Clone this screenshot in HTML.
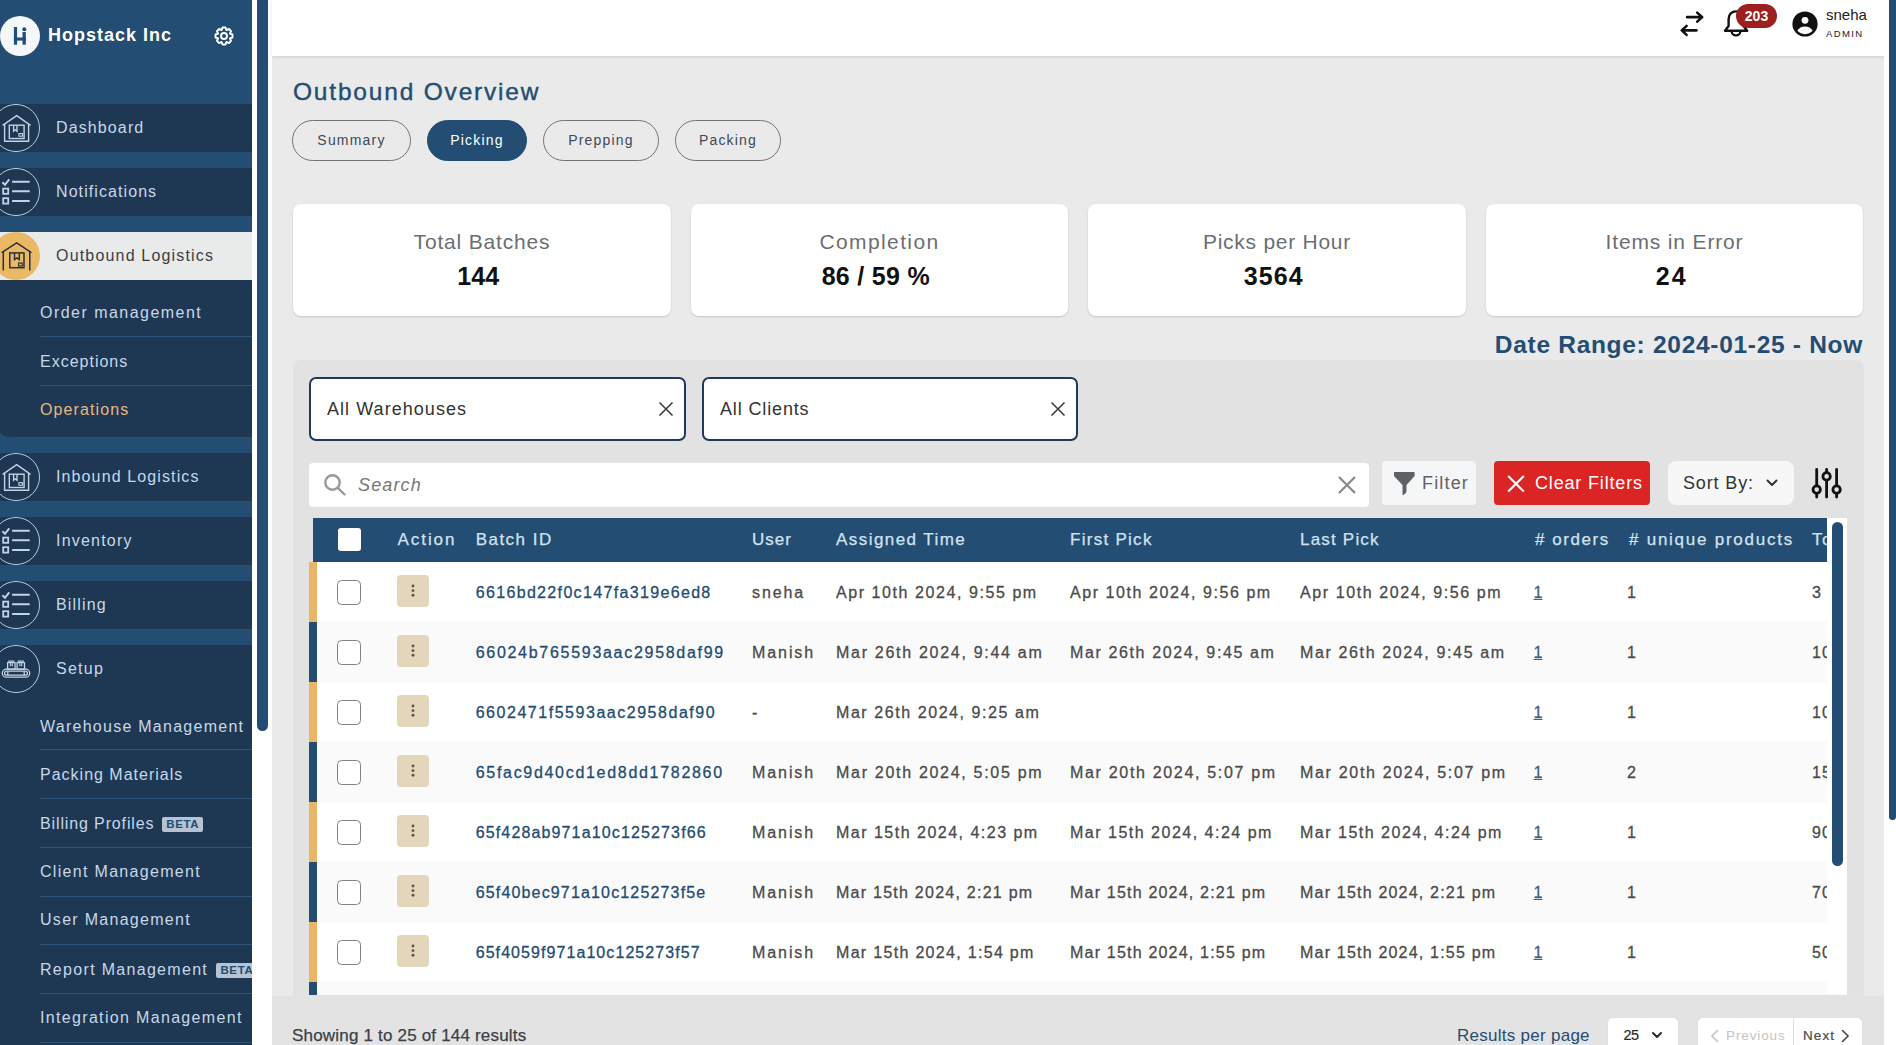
<!DOCTYPE html>
<html><head><meta charset="utf-8">
<style>
*{box-sizing:border-box;margin:0;padding:0}
html,body{width:1896px;height:1045px;overflow:hidden;background:#eaeaea;font-family:"Liberation Sans",sans-serif;position:relative}
.a{position:absolute}
.t{position:absolute;white-space:nowrap;line-height:1}
#sb{left:0;top:0;width:252px;height:1045px;background:#234d72;overflow:hidden}
.band{position:absolute;left:0;width:252px;height:48px;background:#1e3753}
.circ{position:absolute;left:-8px;width:48px;height:48px;border-radius:50%;border:1px solid #b9cadb}
.mi{position:absolute;left:56px;color:#c8d8e9;font-size:16px;line-height:1;white-space:nowrap}
.si{position:absolute;left:40px;color:#c8d8e9;font-size:16px;line-height:1;white-space:nowrap}
.sep{position:absolute;left:40px;width:212px;height:1px;background:#2e5479}
.beta{display:inline-block;width:41px;text-align:center;background:#b5c3d3;color:#234d72;font-weight:bold;font-size:11.5px;line-height:14.5px;border-radius:2px;letter-spacing:0.6px;vertical-align:1px;margin-left:2.5px}

.tab{top:120px;height:41px;border:1px solid #6f747a;border-radius:21px;color:#3d4957;font-size:14px;line-height:39px;text-align:center;letter-spacing:1.2px}
.tab.act{background:#234d72;border-color:#234d72;color:#fff}
.card{top:204px;height:112px;background:#fff;border-radius:8px;box-shadow:0 1px 2px rgba(0,0,0,0.16);text-align:center}
.ct{position:absolute;left:0;right:0;top:27px;font-size:21px;line-height:21px;color:#6b6e73}
.cv{position:absolute;left:0;right:7.6px;top:60px;font-size:25px;line-height:25px;font-weight:bold;color:#111}
.sel{top:377px;height:64px;background:#fff;border:2px solid #1f3a59;border-radius:7px}
.th{position:absolute;top:0;height:44px;line-height:44px;color:#d3e2f1;font-size:17px;font-weight:normal;white-space:nowrap;-webkit-text-stroke:0.25px #d3e2f1}
.row{position:absolute;left:0;width:1518px;height:60px;overflow:hidden}
.row .lb{position:absolute;left:0;top:0;width:8px;height:60px}
.cb{position:absolute;left:28px;top:18px;width:24px;height:25px;border:1.2px solid #7d838b;border-radius:4.5px;background:#fff}
.ab{position:absolute;left:88px;top:13px;width:32px;height:32px;background:#e4d6ba;border-radius:4px}.ab svg{position:absolute;left:0;top:0}
.ab i{position:absolute;left:14.6px;width:2.8px;height:2.8px;border-radius:50%;background:#5a5650}
.td{position:absolute;top:1px;height:60px;line-height:60px;font-size:16px;color:#4b4b4b;white-space:nowrap;-webkit-text-stroke:0.3px currentColor}
</style></head>
<body>
<!-- SIDEBAR -->
<div id="sb" class="a">
  <div class="a" style="left:0;top:16px;width:40px;height:40px;border-radius:50%;background:#f4f7fa"></div>
  <svg class="a" style="left:0;top:16px" width="40" height="40" viewBox="0 0 40 40">
    <rect x="13.9" y="11" width="3.2" height="17.7" fill="#234d72"/>
    <rect x="22.5" y="16" width="3.3" height="12.7" fill="#234d72"/>
    <rect x="13.9" y="21.5" width="11.9" height="3.1" fill="#234d72"/>
    <circle cx="24.3" cy="13.3" r="2" fill="#234d72"/>
  </svg>
  <div class="t" style="left:48px;top:26px;font-size:18px;font-weight:bold;color:#fff;letter-spacing:1px">Hopstack Inc</div>
  <svg class="a" style="left:212px;top:24px" width="24" height="24" viewBox="0 0 24 24" fill="none" stroke="#fff" stroke-width="1.9" stroke-linejoin="round">
    <path d="M9.55 6.09 L10.51 3.53 L13.49 3.53 L14.45 6.09 L16.93 4.96 L19.04 7.07 L17.91 9.55 L20.47 10.51 L20.47 13.49 L17.91 14.45 L19.04 16.93 L16.93 19.04 L14.45 17.91 L13.49 20.47 L10.51 20.47 L9.55 17.91 L7.07 19.04 L4.96 16.93 L6.09 14.45 L3.53 13.49 L3.53 10.51 L6.09 9.55 L4.96 7.07 L7.07 4.96 Z"/>
    <circle cx="12" cy="12" r="3"/>
  </svg>

  <!-- Dashboard -->
  <div class="band" style="top:104px"></div>
  <div class="circ" style="top:104px"></div><svg class="a" style="left:0;top:104px" width="40" height="48" viewBox="0 0 40 48" fill="none" stroke="#c3d3e4" stroke-width="1.4" stroke-linejoin="miter">
<path d="M2.6 21.4 L16.7 11.6 L30.6 21.4"/><path d="M4.6 20 V37.2 H28.6 V20"/>
<rect x="9.3" y="21.2" width="14.8" height="13.3"/><path d="M13.6 21.2 V27.2 L15.3 25.8 L17 27.2 V21.2"/><rect x="18.9" y="29.6" width="3.6" height="2.6" stroke-width="1.1"/></svg>
  <div class="mi" style="top:120px;letter-spacing:1.12px">Dashboard</div>
  <!-- Notifications -->
  <div class="band" style="top:168px"></div>
  <div class="circ" style="top:168px"></div><svg class="a" style="left:0;top:168px" width="40" height="48" viewBox="0 0 40 48" fill="none" stroke="#c3d3e4" stroke-width="2" stroke-linecap="butt">
<path d="M2.4 14.2 L5 16.8 L9.2 11.4"/><path d="M12.1 13.7 H29.7 M12.1 23.3 H29.7 M12.1 32.9 H29.7"/>
<rect x="3.2" y="20.6" width="5" height="5.2" stroke-width="1.8"/><rect x="3.2" y="30.2" width="5" height="5.4" stroke-width="1.8"/></svg>
  <div class="mi" style="top:184px;letter-spacing:1.08px">Notifications</div>
  <!-- Outbound -->
  <div class="band" style="top:232px;height:48px;background:#e9eaea"></div>
  <div class="a" style="left:-8px;top:232px;width:48px;height:48px;border-radius:50%;background:#e9b965"></div><svg class="a" style="left:0;top:232px" width="40" height="48" viewBox="0 0 40 48" fill="none" stroke="#2b303a" stroke-width="1.5">
<path d="M1.6 20.6 L16.7 10.9 L31.4 20.6"/><path d="M3.3 19.4 V38.6 M29.8 19.4 V38.6"/>
<rect x="9.8" y="20.9" width="14.2" height="14.8"/><path d="M14.5 20.9 V27.6 L16.9 25.9 L19.3 27.6 V20.9"/><rect x="18.6" y="31" width="3.6" height="3" stroke-width="1.2"/></svg>
  <div class="mi" style="top:248px;letter-spacing:1.18px;color:#3a3f47">Outbound Logistics</div>
  <div class="a" style="left:0;top:280px;width:252px;height:157px;background:#1e3753;border-bottom-left-radius:10px 6px"></div>
  <div class="si" style="top:305px;letter-spacing:1.47px">Order management</div>
  <div class="sep" style="top:336px"></div>
  <div class="si" style="top:354px;letter-spacing:1px">Exceptions</div>
  <div class="sep" style="top:385px"></div>
  <div class="si" style="top:402px;letter-spacing:1.11px;color:#e5b97f">Operations</div>
  <!-- Inbound -->
  <div class="band" style="top:453px"></div>
  <div class="circ" style="top:453px"></div><svg class="a" style="left:0;top:453px" width="40" height="48" viewBox="0 0 40 48" fill="none" stroke="#c3d3e4" stroke-width="1.4" stroke-linejoin="miter">
<path d="M2.6 21.4 L16.7 11.6 L30.6 21.4"/><path d="M4.6 20 V37.2 H28.6 V20"/>
<rect x="9.3" y="21.2" width="14.8" height="13.3"/><path d="M13.6 21.2 V27.2 L15.3 25.8 L17 27.2 V21.2"/><rect x="18.9" y="29.6" width="3.6" height="2.6" stroke-width="1.1"/></svg>
  <div class="mi" style="top:469px;letter-spacing:1.12px">Inbound Logistics</div>
  <!-- Inventory -->
  <div class="band" style="top:517px"></div>
  <div class="circ" style="top:517px"></div><svg class="a" style="left:0;top:517px" width="40" height="48" viewBox="0 0 40 48" fill="none" stroke="#c3d3e4" stroke-width="2" stroke-linecap="butt">
<path d="M2.4 14.2 L5 16.8 L9.2 11.4"/><path d="M12.1 13.7 H29.7 M12.1 23.3 H29.7 M12.1 32.9 H29.7"/>
<rect x="3.2" y="20.6" width="5" height="5.2" stroke-width="1.8"/><rect x="3.2" y="30.2" width="5" height="5.4" stroke-width="1.8"/></svg>
  <div class="mi" style="top:533px;letter-spacing:1.2px">Inventory</div>
  <!-- Billing -->
  <div class="band" style="top:581px"></div>
  <div class="circ" style="top:581px"></div><svg class="a" style="left:0;top:581px" width="40" height="48" viewBox="0 0 40 48" fill="none" stroke="#c3d3e4" stroke-width="2" stroke-linecap="butt">
<path d="M2.4 14.2 L5 16.8 L9.2 11.4"/><path d="M12.1 13.7 H29.7 M12.1 23.3 H29.7 M12.1 32.9 H29.7"/>
<rect x="3.2" y="20.6" width="5" height="5.2" stroke-width="1.8"/><rect x="3.2" y="30.2" width="5" height="5.4" stroke-width="1.8"/></svg>
  <div class="mi" style="top:597px;letter-spacing:1.17px">Billing</div>
  <!-- Setup -->
  <div class="a" style="left:0;top:645px;width:252px;height:400px;background:#1e3753"></div>
  <div class="circ" style="top:645px"></div><svg class="a" style="left:0;top:645px" width="40" height="48" viewBox="0 0 40 48" fill="none" stroke="#c3d3e4" stroke-width="1.3">
<rect x="2.3" y="24.2" width="27.4" height="8" rx="4"/><rect x="4.6" y="26.2" width="22.8" height="4" rx="2"/>
<path d="M7.8 26.2 V30.2 M24.2 26.2 V30.2"/>
<rect x="7.6" y="17.6" width="7.4" height="6.6"/><rect x="17.1" y="17.6" width="7.4" height="6.6"/>
<path d="M8.2 16.2 H14.4 M17.7 16.2 H23.9"/><path d="M10.3 17.6 V21 L11.3 20.2 L12.3 21 V17.6 M19.8 17.6 V21 L20.8 20.2 L21.8 21 V17.6" stroke-width="1"/></svg>
  <div class="mi" style="top:661px;letter-spacing:1.25px">Setup</div>
  <div class="si" style="top:719px;letter-spacing:1.26px">Warehouse Management</div>
  <div class="sep" style="top:749px"></div>
  <div class="si" style="top:767px;letter-spacing:1px">Packing Materials</div>
  <div class="sep" style="top:798px"></div>
  <div class="si" style="top:816px;letter-spacing:0.87px">Billing Profiles <span class="beta">BETA</span></div>
  <div class="sep" style="top:847px"></div>
  <div class="si" style="top:864px;letter-spacing:1.31px">Client Management</div>
  <div class="sep" style="top:896px"></div>
  <div class="si" style="top:912px;letter-spacing:1.29px">User Management</div>
  <div class="sep" style="top:944px"></div>
  <div class="si" style="top:962px;letter-spacing:1.31px">Report Management <span class="beta">BETA</span></div>
  <div class="sep" style="top:993px"></div>
  <div class="si" style="top:1010px;letter-spacing:1.33px">Integration Management</div>
  <div class="sep" style="top:1042px"></div>
</div>
<!-- strips -->
<div class="a" style="left:252px;top:0;width:20px;height:1045px;background:#fff"></div>
<div class="a" style="left:257px;top:0;width:11px;height:731px;background:#234d72;border-radius:0 0 6px 6px"></div>


<!-- HEADER -->
<div class="a" style="left:272px;top:0;width:1617px;height:56px;background:#fff;box-shadow:0 1px 3px rgba(0,0,0,0.12)"></div>
<div class="a" style="left:1884px;top:0;width:12px;height:1045px;background:#fff"></div>
<div class="a" style="left:1889px;top:0;width:7px;height:820px;background:#234d72;border-radius:0 0 4px 4px"></div>
<svg class="a" style="left:1676px;top:6px" width="32" height="36" viewBox="0 0 32 36" fill="none" stroke="#111" stroke-width="2.6" stroke-linecap="round" stroke-linejoin="round">
  <path d="M11.1 11.1 H26 M21.2 6.6 L26.2 11.1 L21.2 15.6"/>
  <path d="M20.5 24.4 H5.9 M10.6 19.9 L5.7 24.4 L10.6 28.9"/>
</svg>
<svg class="a" style="left:1720px;top:6px" width="32" height="34" viewBox="0 0 32 34" fill="none" stroke="#111" stroke-width="2.4" stroke-linejoin="round">
  <path d="M5 24.7 H27.2 L23.5 20 V13 C23.5 8 20 5.4 16 5.4 C12 5.4 8.6 8 8.6 13 V20 Z"/>
  <path d="M11.6 25 A4.4 4.4 0 0 0 20.4 25"/>
</svg>
<div class="a" style="left:1736px;top:4px;width:41px;height:24px;border-radius:12px;background:#9e1f20;color:#fff;font-size:14px;font-weight:bold;line-height:24px;text-align:center">203</div>
<svg class="a" style="left:1792px;top:11px" width="26" height="26" viewBox="0 0 26 26">
  <circle cx="13" cy="13" r="12.6" fill="#111"/>
  <circle cx="13" cy="9.3" r="3.4" fill="#fff"/>
  <path d="M5.3 19.6 C7.5 16.3 10 15.4 13 15.4 C16 15.4 18.5 16.3 20.7 19.6 C18.8 21.9 16 23.2 13 23.2 C10 23.2 7.2 21.9 5.3 19.6 Z" fill="#fff"/>
</svg>
<div class="t" style="left:1826px;top:7px;font-size:15px;color:#222">sneha</div>
<div class="t" style="left:1826px;top:29px;font-size:9.5px;color:#222;letter-spacing:1.35px">ADMIN</div>

<!-- TITLE + TABS -->
<div class="t" style="left:293px;top:80px;font-size:24.5px;color:#234d72;letter-spacing:1.81px;-webkit-text-stroke:0.4px #234d72">Outbound Overview</div>
<div class="a tab" style="left:292px;width:119px">Summary</div>
<div class="a tab act" style="left:427px;width:100px">Picking</div>
<div class="a tab" style="left:543px;width:116px">Prepping</div>
<div class="a tab" style="left:675px;width:106px">Packing</div>

<!-- CARDS -->
<div class="a card" style="left:293px;width:378px"><div class="ct" style="letter-spacing:0.83px">Total Batches</div><div class="cv">144</div></div>
<div class="a card" style="left:691px;width:377px"><div class="ct" style="letter-spacing:1.39px">Completion</div><div class="cv" style="letter-spacing:0.31px;right:7.3px">86 / 59 %</div></div>
<div class="a card" style="left:1088px;width:378px"><div class="ct" style="letter-spacing:0.74px">Picks per Hour</div><div class="cv" style="letter-spacing:1.13px;right:6.5px">3564</div></div>
<div class="a card" style="left:1486px;width:377px"><div class="ct" style="letter-spacing:0.85px">Items in Error</div><div class="cv" style="letter-spacing:2px;right:5.6px">24</div></div>

<div class="t" style="right:33px;top:333px;font-size:24.5px;font-weight:bold;color:#234d72;letter-spacing:0.7px">Date Range: 2024-01-25 - Now</div>

<!-- PANEL -->
<div class="a" style="left:293px;top:360px;width:1571px;height:700px;background:#e2e2e2;border-radius:8px"></div>
<div class="a sel" style="left:309px;width:377px"><span class="t" style="left:16px;top:21px;font-size:18px;color:#333;letter-spacing:1.05px">All Warehouses</span>
  <svg class="a" style="left:347px;top:21.5px" width="16" height="16" viewBox="0 0 16 16" stroke="#3a3e44" stroke-width="1.6"><path d="M1.5 1.5 L14.5 14.5 M14.5 1.5 L1.5 14.5"/></svg></div>
<div class="a sel" style="left:702px;width:376px"><span class="t" style="left:16px;top:21px;font-size:18px;color:#333;letter-spacing:0.86px">All Clients</span>
  <svg class="a" style="left:346px;top:21.5px" width="16" height="16" viewBox="0 0 16 16" stroke="#3a3e44" stroke-width="1.6"><path d="M1.5 1.5 L14.5 14.5 M14.5 1.5 L1.5 14.5"/></svg></div>

<div class="a" style="left:309px;top:463px;width:1060px;height:44px;background:#fff;border-radius:4px"></div>
<svg class="a" style="left:322px;top:472px" width="26" height="26" viewBox="0 0 26 26" fill="none" stroke="#9a9a9a" stroke-width="2.4" stroke-linecap="round"><circle cx="10.5" cy="10.5" r="7.2"/><path d="M15.8 15.8 L22.5 22.5"/></svg>
<div class="t" style="left:358px;top:476px;font-size:18px;font-style:italic;color:#777;letter-spacing:1.14px">Search</div>
<svg class="a" style="left:1337px;top:475px" width="20" height="20" viewBox="0 0 20 20" stroke="#888" stroke-width="2.2"><path d="M2 2 L18 18 M18 2 L2 18"/></svg>

<div class="a" style="left:1382px;top:461px;width:94px;height:44px;background:#f5f6f7;border-radius:4px"></div>
<svg class="a" style="left:1392px;top:471px" width="24" height="26" viewBox="0 0 24 26"><path d="M2.2 1 H21.9 C22.5 1 22.6 1.5 22.6 2 V5 L14.5 14 V20 C14.5 21.6 13 22.8 11.5 24 H10.5 V14 L2 5 V2 C2 1.5 2.2 1 2.2 1 Z" fill="#5f6165"/></svg>
<div class="t" style="left:1422px;top:474px;font-size:18px;color:#5f6165;letter-spacing:1.16px">Filter</div>

<div class="a" style="left:1494px;top:461px;width:156px;height:44px;background:#db2424;border-radius:4px"></div>
<svg class="a" style="left:1505px;top:473px" width="22" height="21" viewBox="0 0 22 21" stroke="#fff" stroke-width="2.2"><path d="M3.2 3 L18.8 18.5 M18.8 3 L3.2 18.5"/></svg>
<div class="t" style="left:1535px;top:474px;font-size:18px;color:#fff;letter-spacing:0.83px">Clear Filters</div>

<div class="a" style="left:1668px;top:461px;width:126px;height:44px;background:#f7f7f8;border-radius:8px"></div>
<div class="t" style="left:1683px;top:474px;font-size:18px;color:#333;letter-spacing:0.86px">Sort By:</div>
<svg class="a" style="left:1765px;top:477px" width="14" height="12" viewBox="0 0 14 12" fill="none" stroke="#333" stroke-width="2" stroke-linecap="round" stroke-linejoin="round"><path d="M2.5 3.5 L7 8 L11.5 3.5"/></svg>

<svg class="a" style="left:1808px;top:466px" width="38" height="36" viewBox="0 0 38 36" fill="none" stroke="#111" stroke-width="2.8" stroke-linecap="round">
  <path d="M8.7 3.5 V19.5 M8.7 27.7 V31 M18.6 3.5 V6.3 M18.6 14.5 V31 M28.6 3.5 V19.5 M28.6 27.7 V31"/>
  <circle cx="8.7" cy="23.6" r="3.7"/><circle cx="18.6" cy="10.4" r="3.7"/><circle cx="28.6" cy="23.6" r="3.7"/>
</svg>

<!-- TABLE -->
<div class="a" style="left:1827px;top:518px;width:20px;height:477px;background:#fff"></div>
<div class="a" style="left:309px;top:518px;width:1538px;height:477px;overflow:hidden">
<div class="a" style="left:4px;top:0;width:1514px;height:44px;background:#234d72;overflow:hidden"><div class="a" style="left:25px;top:10px;width:23px;height:23px;background:#fff;border-radius:3px"></div><div class="th" style="left:84.5px;letter-spacing:1.94px">Action</div><div class="th" style="left:162.7px;letter-spacing:1.47px">Batch ID</div><div class="th" style="left:439px;letter-spacing:1.0px">User</div><div class="th" style="left:523px;letter-spacing:1.44px">Assigned Time</div><div class="th" style="left:757px;letter-spacing:1.28px">First Pick</div><div class="th" style="left:987px;letter-spacing:1.2px">Last Pick</div><div class="th" style="left:1222px;letter-spacing:1.57px"># orders</div><div class="th" style="left:1316px;letter-spacing:1.75px"># unique products</div><div class="th" style="left:1499px;letter-spacing:1.5px">Total</div></div>
<div class="row" style="top:44px;background:#fff"><div class="lb" style="background:#e8b664"></div><div class="cb"></div><div class="ab"><svg width="32" height="32" viewBox="0 0 32 32" fill="#5a5650"><circle cx="16" cy="11" r="1.45"/><circle cx="16" cy="15.6" r="1.45"/><circle cx="16" cy="20.3" r="1.45"/></svg></div><div class="td" style="left:166.7px;color:#234d72;letter-spacing:1.34px">6616bd22f0c147fa319e6ed8</div><div class="td" style="left:443px;letter-spacing:1.88px">sneha</div><div class="td" style="left:527px;letter-spacing:1.57px">Apr 10th 2024, 9:55 pm</div><div class="td" style="left:761px;letter-spacing:1.57px">Apr 10th 2024, 9:56 pm</div><div class="td" style="left:991px;letter-spacing:1.59px">Apr 10th 2024, 9:56 pm</div><div class="td" style="left:1224.5px;color:#3f5f7f;text-decoration:underline">1</div><div class="td" style="left:1318px">1</div><div class="td" style="left:1503px;letter-spacing:1px">3</div></div>
<div class="row" style="top:104px;background:#fafafb"><div class="lb" style="background:#234d72"></div><div class="cb"></div><div class="ab"><svg width="32" height="32" viewBox="0 0 32 32" fill="#5a5650"><circle cx="16" cy="11" r="1.45"/><circle cx="16" cy="15.6" r="1.45"/><circle cx="16" cy="20.3" r="1.45"/></svg></div><div class="td" style="left:166.7px;color:#234d72;letter-spacing:1.71px">66024b765593aac2958daf99</div><div class="td" style="left:443px;letter-spacing:1.92px">Manish</div><div class="td" style="left:527px;letter-spacing:1.71px">Mar 26th 2024, 9:44 am</div><div class="td" style="left:761px;letter-spacing:1.62px">Mar 26th 2024, 9:45 am</div><div class="td" style="left:991px;letter-spacing:1.63px">Mar 26th 2024, 9:45 am</div><div class="td" style="left:1224.5px;color:#3f5f7f;text-decoration:underline">1</div><div class="td" style="left:1318px">1</div><div class="td" style="left:1503px;letter-spacing:1px">10</div></div>
<div class="row" style="top:164px;background:#fff"><div class="lb" style="background:#e8b664"></div><div class="cb"></div><div class="ab"><svg width="32" height="32" viewBox="0 0 32 32" fill="#5a5650"><circle cx="16" cy="11" r="1.45"/><circle cx="16" cy="15.6" r="1.45"/><circle cx="16" cy="20.3" r="1.45"/></svg></div><div class="td" style="left:166.7px;color:#234d72;letter-spacing:1.53px">6602471f5593aac2958daf90</div><div class="td" style="left:443px;letter-spacing:1.9px">-</div><div class="td" style="left:527px;letter-spacing:1.57px">Mar 26th 2024, 9:25 am</div><div class="td" style="left:1224.5px;color:#3f5f7f;text-decoration:underline">1</div><div class="td" style="left:1318px">1</div><div class="td" style="left:1503px;letter-spacing:1px">10</div></div>
<div class="row" style="top:224px;background:#fafafb"><div class="lb" style="background:#234d72"></div><div class="cb"></div><div class="ab"><svg width="32" height="32" viewBox="0 0 32 32" fill="#5a5650"><circle cx="16" cy="11" r="1.45"/><circle cx="16" cy="15.6" r="1.45"/><circle cx="16" cy="20.3" r="1.45"/></svg></div><div class="td" style="left:166.7px;color:#234d72;letter-spacing:1.7px">65fac9d40cd1ed8dd1782860</div><div class="td" style="left:443px;letter-spacing:1.92px">Manish</div><div class="td" style="left:527px;letter-spacing:1.7px">Mar 20th 2024, 5:05 pm</div><div class="td" style="left:761px;letter-spacing:1.68px">Mar 20th 2024, 5:07 pm</div><div class="td" style="left:991px;letter-spacing:1.68px">Mar 20th 2024, 5:07 pm</div><div class="td" style="left:1224.5px;color:#3f5f7f;text-decoration:underline">1</div><div class="td" style="left:1318px">2</div><div class="td" style="left:1503px;letter-spacing:1px">15</div></div>
<div class="row" style="top:284px;background:#fff"><div class="lb" style="background:#e8b664"></div><div class="cb"></div><div class="ab"><svg width="32" height="32" viewBox="0 0 32 32" fill="#5a5650"><circle cx="16" cy="11" r="1.45"/><circle cx="16" cy="15.6" r="1.45"/><circle cx="16" cy="20.3" r="1.45"/></svg></div><div class="td" style="left:166.7px;color:#234d72;letter-spacing:1.14px">65f428ab971a10c125273f66</div><div class="td" style="left:443px;letter-spacing:1.92px">Manish</div><div class="td" style="left:527px;letter-spacing:1.49px">Mar 15th 2024, 4:23 pm</div><div class="td" style="left:761px;letter-spacing:1.5px">Mar 15th 2024, 4:24 pm</div><div class="td" style="left:991px;letter-spacing:1.5px">Mar 15th 2024, 4:24 pm</div><div class="td" style="left:1224.5px;color:#3f5f7f;text-decoration:underline">1</div><div class="td" style="left:1318px">1</div><div class="td" style="left:1503px;letter-spacing:1px">90</div></div>
<div class="row" style="top:344px;background:#fafafb"><div class="lb" style="background:#234d72"></div><div class="cb"></div><div class="ab"><svg width="32" height="32" viewBox="0 0 32 32" fill="#5a5650"><circle cx="16" cy="11" r="1.45"/><circle cx="16" cy="15.6" r="1.45"/><circle cx="16" cy="20.3" r="1.45"/></svg></div><div class="td" style="left:166.7px;color:#234d72;letter-spacing:1.16px">65f40bec971a10c125273f5e</div><div class="td" style="left:443px;letter-spacing:1.92px">Manish</div><div class="td" style="left:527px;letter-spacing:1.25px">Mar 15th 2024, 2:21 pm</div><div class="td" style="left:761px;letter-spacing:1.2px">Mar 15th 2024, 2:21 pm</div><div class="td" style="left:991px;letter-spacing:1.2px">Mar 15th 2024, 2:21 pm</div><div class="td" style="left:1224.5px;color:#3f5f7f;text-decoration:underline">1</div><div class="td" style="left:1318px">1</div><div class="td" style="left:1503px;letter-spacing:1px">70</div></div>
<div class="row" style="top:404px;background:#fff"><div class="lb" style="background:#e8b664"></div><div class="cb"></div><div class="ab"><svg width="32" height="32" viewBox="0 0 32 32" fill="#5a5650"><circle cx="16" cy="11" r="1.45"/><circle cx="16" cy="15.6" r="1.45"/><circle cx="16" cy="20.3" r="1.45"/></svg></div><div class="td" style="left:166.7px;color:#234d72;letter-spacing:1.07px">65f4059f971a10c125273f57</div><div class="td" style="left:443px;letter-spacing:1.92px">Manish</div><div class="td" style="left:527px;letter-spacing:1.31px">Mar 15th 2024, 1:54 pm</div><div class="td" style="left:761px;letter-spacing:1.2px">Mar 15th 2024, 1:55 pm</div><div class="td" style="left:991px;letter-spacing:1.2px">Mar 15th 2024, 1:55 pm</div><div class="td" style="left:1224.5px;color:#3f5f7f;text-decoration:underline">1</div><div class="td" style="left:1318px">1</div><div class="td" style="left:1503px;letter-spacing:1px">50</div></div>
<div class="row" style="top:464px;background:#fafafb"><div class="lb" style="background:#234d72"></div><div class="cb"></div><div class="ab"><svg width="32" height="32" viewBox="0 0 32 32" fill="#5a5650"><circle cx="16" cy="11" r="1.45"/><circle cx="16" cy="15.6" r="1.45"/><circle cx="16" cy="20.3" r="1.45"/></svg></div></div>
</div>
<div class="a" style="left:1832px;top:522px;width:11px;height:344px;background:#234d72;border-radius:6px"></div>

<!-- FOOTER -->
<div class="a" style="left:272px;top:996px;width:1612px;height:49px;background:#e3e3e3"></div>
<div class="t" style="left:292px;top:1027px;font-size:17px;color:#3c4047;letter-spacing:0.19px;-webkit-text-stroke:0.25px #3c4047">Showing 1 to 25 of 144 results</div>
<div class="t" style="left:1457px;top:1027px;font-size:17px;color:#234d72;letter-spacing:0.27px">Results per page</div>
<div class="a" style="left:1607px;top:1017px;width:72px;height:40px;background:#fff;border-radius:6px;border:1px solid #e0e0e0"></div>
<div class="t" style="left:1623.5px;top:1028px;font-size:14.5px;color:#2a2a2a;letter-spacing:-0.5px;-webkit-text-stroke:0.2px #2a2a2a">25</div>
<svg class="a" style="left:1650px;top:1029px" width="14" height="12" viewBox="0 0 14 12" fill="none" stroke="#2a2a2a" stroke-width="2" stroke-linecap="round" stroke-linejoin="round"><path d="M3 4 L7 8 L11 4"/></svg>
<div class="a" style="left:1697px;top:1017px;width:166px;height:40px;background:#fff;border-radius:6px;border:1px solid #e0e0e0"></div>
<div class="a" style="left:1793px;top:1017px;width:1px;height:30px;background:#dedede"></div>
<svg class="a" style="left:1709px;top:1028px" width="11" height="16" viewBox="0 0 11 16" fill="none" stroke="#c4c4c4" stroke-width="1.6" stroke-linecap="round"><path d="M8.5 2.5 L3 8 L8.5 13.5"/></svg>
<div class="t" style="left:1726px;top:1029px;font-size:13.5px;color:#c4c4c4;letter-spacing:0.89px">Previous</div>
<div class="t" style="left:1803px;top:1029px;font-size:13.5px;color:#4a4a4a;letter-spacing:1.1px;-webkit-text-stroke:0.2px #4a4a4a">Next</div>
<svg class="a" style="left:1840px;top:1028px" width="11" height="16" viewBox="0 0 11 16" fill="none" stroke="#4a4a4a" stroke-width="1.6" stroke-linecap="round"><path d="M2.5 2.5 L8 8 L2.5 13.5"/></svg>

</body></html>
